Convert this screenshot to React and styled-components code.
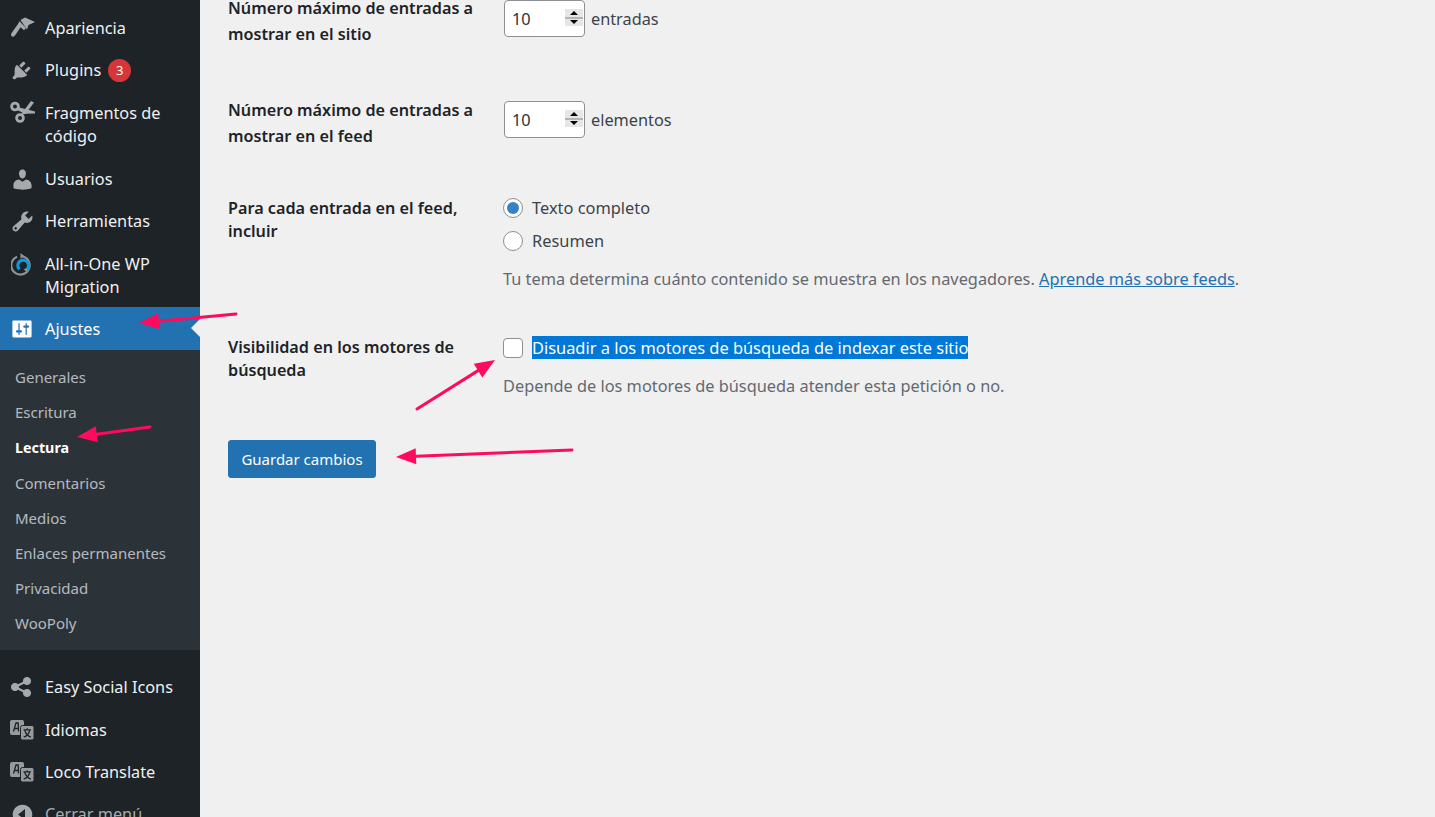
import React from 'react'
import styled, { createGlobalStyle } from 'styled-components'

const GlobalStyle = createGlobalStyle`
    html, body { margin: 0; padding: 0; height: 100%; overflow: hidden; background: #f0f0f1; }
    body { font-family: "Noto Sans", "Open Sans", sans-serif; }
`

const Page = styled.div`
    position: relative;
    display: flex;
    width: 100%;
    height: 817px;
    overflow: hidden;
`

const Sidebar = styled.nav`
    flex: 0 0 200px;
    width: 200px;
    padding-top: 7px;
    background: #1d2327;
    overflow: hidden;
`

const MenuItem = styled.div`
    position: relative;
    display: flex;
    align-items: ${p => (p.$two ? 'flex-start' : 'center')};
    padding: ${p => p.$pad || '9.6px 10px'};
    margin-top: ${p => p.$top || 0}px;
    font-size: 16.3px;
    line-height: 23px;
    color: ${p => (p.$dim ? '#a7aaad' : '#f0f0f1')};
    background: ${p => (p.$active ? '#2271b1' : 'transparent')};
    ${p => p.$active && 'color: #fff;'}
`

const IconBox = styled.span`
    flex: 0 0 35px;
    width: 35px;
    height: 23px;
    display: flex;
    align-items: center;
    color: ${p => (p.$active ? '#fff' : '#a7aaad')};
`

const Pointer = styled.span`
    position: absolute;
    right: 0;
    top: 50%;
    margin-top: -9px;
    border: 9px solid transparent;
    border-right-color: #f0f0f1;
    border-left-width: 0;
`

const Badge = styled.span`
    display: inline-flex;
    align-items: center;
    justify-content: center;
    width: 23px;
    height: 23px;
    margin-left: 7px;
    border-radius: 50%;
    background: #d63638;
    color: #fff;
    font-size: 13px;
`

const SubMenu = styled.div`
    background: #2c3338;
    padding: 9.5px 0 9px;
    margin-bottom: 16px;
`

const SubItem = styled.div`
    padding: 0 15px;
    height: 35.2px;
    display: flex;
    align-items: center;
    font-size: ${p => (p.$current ? '14.3px' : '15px')};
    font-weight: ${p => (p.$current ? 700 : 400)};
    color: ${p => (p.$current ? '#fff' : 'rgba(240, 246, 252, 0.7)')};
`

const Content = styled.main`
    flex: 1;
    padding: 0 0 0 28px;
    color: #3c434a;
`

const FormRow = styled.div`
    display: flex;
    align-items: flex-start;
    margin-top: ${p => p.$top}px;
`

const Label = styled.div`
    flex: 0 0 276px;
    padding-right: 26px;
    box-sizing: border-box;
    font-size: 16.2px;
    font-weight: 600;
    color: #1d2327;
    line-height: ${p => p.$lh}px;
`

const Field = styled.div`
    flex: 1;
    margin: ${p => p.$top || 0}px 0 0 -1px;
    font-size: 16.4px;
    line-height: 23px;
`

const InlineField = styled.div`
    display: flex;
    align-items: center;
    gap: 6px;
    margin-top: ${p => p.$top}px;
    font-size: 16.3px;
`

const NumberBox = styled.div`
    position: relative;
    width: 81px;
    height: 37px;
`

const NumberInput = styled.input`
    box-sizing: border-box;
    width: 100%;
    height: 100%;
    padding: 0 7px;
    border: 1px solid #8c8f94;
    border-radius: 4px;
    background: #fff;
    color: #2c3338;
    font-family: inherit;
    font-size: 16.3px;
    outline: none;
    appearance: textfield;
    &::-webkit-inner-spin-button {
        appearance: none;
    }
`

const Spinner = styled.span`
    position: absolute;
    right: 2px;
    top: 9px;
    width: 18px;
    height: 17px;
    display: flex;
    flex-direction: column;
    background: #e6e6e6;
    pointer-events: none;
`

const SpinPart = styled.span`
    flex: 1;
    display: flex;
    align-items: center;
    justify-content: center;
    ${p => p.$up && 'border-bottom: 2px solid #b4b4b4;'}
    &::before {
        content: "";
        border-left: 4px solid transparent;
        border-right: 4px solid transparent;
        ${p => (p.$up ? 'border-bottom: 4px solid #000;' : 'border-top: 4px solid #000;')}
    }
`

const Choice = styled.label`
    display: flex;
    align-items: center;
    gap: 9px;
    height: 23px;
    margin-bottom: ${p => p.$gap || 0}px;
`

const Radio = styled.input`
    appearance: none;
    box-sizing: border-box;
    width: 20px;
    height: 20px;
    margin: 0;
    border: 1px solid #8c8f94;
    border-radius: 50%;
    background: #fff;
    position: relative;
    &:checked::before {
        content: "";
        position: absolute;
        left: 3px;
        top: 3px;
        width: 12px;
        height: 12px;
        border-radius: 50%;
        background: #3582c4;
    }
`

const Checkbox = styled.input`
    appearance: none;
    box-sizing: border-box;
    width: 20px;
    height: 20px;
    margin: 0;
    border: 1px solid #8c8f94;
    border-radius: 4px;
    background: #fff;
`

const Selected = styled.span`
    background: #0078d7;
    color: #fff;
`

const Description = styled.p`
    margin: ${p => p.$top}px 0 0;
    color: #646970;
    font-size: 16.33px;
    line-height: 23px;
    a {
        color: #2271b1;
        text-decoration: underline;
    }
`

const SaveButton = styled.button`
    display: block;
    box-sizing: border-box;
    width: 148px;
    height: 38px;
    margin-top: 42px;
    border: 1px solid #2271b1;
    border-radius: 3px;
    background: #2271b1;
    color: #fff;
    font-family: inherit;
    font-size: 15px;
`

const ArrowLayer = styled.svg`
    position: absolute;
    left: 0;
    top: 0;
    pointer-events: none;
`

const Dash = ({ d, size = 20 }) => (
    <svg width={size} height={size} viewBox="0 0 20 20" fill="currentColor"><path d={d} /></svg>
)

const Brush = () => (
    <svg width="24" height="20" viewBox="0 0 24 20" fill="currentColor" style={{ marginLeft: 1, marginTop: -3 }}>
        <path d="M9.5 3L14 .5 24 5l-6.5 3-1.5 4.5z" />
        <path d="M8.5 4.2L15 11l-2 2.2-3.4-3L3.6 19c-1 1-2.4.9-3.1 0-.7-.9-.6-2 .3-3.2L7 7z" />
    </svg>
)

const Scissors = () => (
    <svg width="25" height="23" viewBox="0 0 25 23" fill="none" stroke="currentColor" strokeWidth="2.8" style={{ marginTop: -3 }}>
        <circle cx="5" cy="6.5" r="3.4" />
        <circle cx="10" cy="18" r="3.4" />
        <path d="M11 14.5L21 1l3 1.5-8.5 11.5z" fill="currentColor" stroke="none" />
        <path d="M7.5 7L25 11.5v2l-10 .2-8-3.7z" fill="currentColor" stroke="none" />
    </svg>
)

const Share = () => (
    <svg width="22" height="22" viewBox="0 0 22 22" fill="currentColor" stroke="currentColor">
        <circle cx="5" cy="11" r="3.6" />
        <circle cx="17" cy="5" r="3.6" />
        <circle cx="17" cy="17" r="3.6" />
        <path d="M5 11L17 5M5 11l12 6" strokeWidth="2" />
    </svg>
)

const Translate = () => (
    <svg width="24" height="20" viewBox="0 0 24 20">
        <rect x="0" y="0" width="14" height="15" rx="2" fill="#989b9e" />
        <path d="M3.5 11.5L6 3h2.2l.3 8.5M5 8.5h3.6" fill="none" stroke="#1d2327" strokeWidth="1.3" />
        <rect x="10.5" y="5.5" width="13.5" height="14.5" rx="2" fill="#989b9e" stroke="#1d2327" />
        <path d="M13.5 9.8h7.5M17.2 8.2v1.6M14.8 10.5c.9 3.6 3.3 5.6 6.2 6.6M19.7 10.5c-.9 3.6-3 5.6-6 6.6" fill="none" stroke="#1d2327" strokeWidth="1.2" />
    </svg>
)

const Migration = () => (
    <svg width="22" height="24" viewBox="0 0 22 24" fill="none" style={{ marginLeft: 1 }}>
        <path d="M6 3.8a9.2 9.2 0 1 0 6-.3" stroke="#8f9396" strokeWidth="2.2" />
        <path d="M9.5 0l4 3.2-4 2.6z" fill="#8f9396" />
        <path d="M14.6 17.4a5.4 5.4 0 1 0-6.2-1" stroke="#0a9ae0" strokeWidth="3.2" />
        <path d="M12.5 16.2l3.8-1-.4 3.8z" fill="#8f9396" />
    </svg>
)

const paths = {
    plug: 'M13.11 4.36L9.87 7.6 8 5.73l3.24-3.24c.35-.34 1.05-.2 1.56.32.52.51.66 1.21.31 1.55zm-8 1.77l.91-1.12 9.01 9.01-1.19.84c-.71.71-2.63 1.16-3.82 1.16H6.14L4.9 17.26c-.59.59-1.54.59-2.12 0-.59-.58-.59-1.53 0-2.12l1.24-1.24v-3.88c0-1.13.4-3.19 1.09-3.89zm7.26 3.97l3.24-3.24c.34-.35 1.04-.21 1.55.31.52.51.66 1.21.31 1.55l-3.24 3.25z',
    user: 'M10 9.25c-2.27 0-2.73-3.44-2.73-3.44C7 4.02 7.82 2 9.97 2c2.16 0 2.98 2.02 2.71 3.81 0 0-.41 3.44-2.68 3.44zm0 2.57L12.72 10c2.39 0 4.52 2.33 4.52 4.53v2.49s-3.65 1.13-7.24 1.13c-3.65 0-7.24-1.13-7.24-1.13v-2.49c0-2.25 1.94-4.48 4.47-4.48z',
    wrench: 'M16.68 9.77c-1.34 1.34-3.3 1.67-4.95.99l-5.41 6.52c-.99.99-2.59.99-3.58 0s-.99-2.59 0-3.57l6.52-5.42c-.68-1.65-.35-3.61.99-4.95 1.28-1.28 3.12-1.62 4.72-1.06l-2.89 2.89 2.82 2.82 2.86-2.87c.53 1.58.18 3.39-1.08 4.65zM3.81 16.21c.4.39 1.04.39 1.43 0 .4-.4.4-1.04 0-1.43-.39-.4-1.03-.4-1.43 0-.39.39-.39 1.03 0 1.43z',
    settings: 'M18 16V4c0-.55-.45-1-1-1H3c-.55 0-1 .45-1 1v12c0 .55.45 1 1 1h14c.55 0 1-.45 1-1zM8 11h1c.55 0 1 .45 1 1s-.45 1-1 1H8v1.5c0 .28-.22.5-.5.5s-.5-.22-.5-.5V13H6c-.55 0-1-.45-1-1s.45-1 1-1h1V5.5c0-.28.22-.5.5-.5s.5.22.5.5V11zm5-2h-1c-.55 0-1-.45-1-1s.45-1 1-1h1V5.5c0-.28.22-.5.5-.5s.5.22.5.5V7h1c.55 0 1 .45 1 1s-.45 1-1 1h-1v5.5c0 .28-.22.5-.5.5s-.5-.22-.5-.5V9z',
    collapse: 'M10 2.16c4.33 0 7.84 3.51 7.84 7.84s-3.51 7.84-7.84 7.84S2.16 14.33 2.16 10 5.67 2.16 10 2.16zM12 5.5L6.5 10l5.5 4.5v-9z',
}

const subItems = ['Generales', 'Escritura', 'Lectura', 'Comentarios', 'Medios', 'Enlaces permanentes', 'Privacidad', 'WooPoly']

const Arrow = ({ x1, y1, x2, y2 }) => {
    // thin shaft ending in a filled head
    const a = Math.atan2(y2 - y1, x2 - x1)
    const bx = x2 - Math.cos(a) * 20
    const by = y2 - Math.sin(a) * 20
    const nx = -Math.sin(a)
    const ny = Math.cos(a)
    const head = `${x2},${y2} ${bx + nx * 8},${by + ny * 8} ${bx - nx * 8},${by - ny * 8}`
    return (
        <g>
            <line x1={x1} y1={y1} x2={bx} y2={by} stroke="#ff0a5c" strokeWidth="3" strokeLinecap="round" />
            <polygon points={head} fill="#ff0a5c" />
        </g>
    )
}

const NumberField = () => (
    <NumberBox>
        <NumberInput type="number" defaultValue="10" />
        <Spinner>
            <SpinPart $up />
            <SpinPart />
        </Spinner>
    </NumberBox>
)

const App = () => (
    <Page>
        <GlobalStyle />
        <Sidebar>
            <MenuItem><IconBox><Brush /></IconBox>Apariencia</MenuItem>
            <MenuItem><IconBox><Dash d={paths.plug} size={23} /></IconBox>Plugins<Badge>3</Badge></MenuItem>
            <MenuItem $two $pad="10.5px 10px 10.6px"><IconBox><Scissors /></IconBox><span>Fragmentos de<br />código</span></MenuItem>
            <MenuItem><IconBox><Dash d={paths.user} size={25} /></IconBox>Usuarios</MenuItem>
            <MenuItem><IconBox><Dash d={paths.wrench} size={25} /></IconBox>Herramientas</MenuItem>
            <MenuItem $two $pad="10.5px 10px 7.6px"><IconBox><Migration /></IconBox><span>All-in-One WP<br />Migration</span></MenuItem>
            <MenuItem $active $pad="11px 10px 9px"><IconBox $active><Dash d={paths.settings} size={24} /></IconBox>Ajustes<Pointer /></MenuItem>
            <SubMenu>
                {subItems.map(item => (
                    <SubItem key={item} $current={item === 'Lectura'}>{item}</SubItem>
                ))}
            </SubMenu>
            <MenuItem><IconBox><Share /></IconBox>Easy Social Icons</MenuItem>
            <MenuItem $top={1}><IconBox><Translate /></IconBox>Idiomas</MenuItem>
            <MenuItem><IconBox><Translate /></IconBox>Loco Translate</MenuItem>
            <MenuItem $dim><IconBox><Dash d={paths.collapse} size={25} /></IconBox>Cerrar menú</MenuItem>
        </Sidebar>
        <Content>
            <FormRow $top={-5}>
                <Label $lh={26}>Número máximo de entradas a mostrar en el sitio</Label>
                <InlineField $top={5}>
                    <NumberField />
                    entradas
                </InlineField>
            </FormRow>
            <FormRow $top={50}>
                <Label $lh={26}>Número máximo de entradas a mostrar en el feed</Label>
                <InlineField $top={4}>
                    <NumberField />
                    elementos
                </InlineField>
            </FormRow>
            <FormRow $top={48}>
                <Label $lh={23}>Para cada entrada en el feed, incluir</Label>
                <Field $top={-1}>
                    <Choice $gap={10}><Radio type="radio" name="feed" defaultChecked />Texto completo</Choice>
                    <Choice><Radio type="radio" name="feed" />Resumen</Choice>
                    <Description $top={16}>
                        Tu tema determina cuánto contenido se muestra en los navegadores. <a href="#feeds">Aprende más sobre feeds</a>.
                    </Description>
                </Field>
            </FormRow>
            <FormRow $top={45}>
                <Label $lh={23}>Visibilidad en los motores de búsqueda</Label>
                <Field>
                    <Choice><Checkbox type="checkbox" /><Selected>Disuadir a los motores de búsqueda de indexar este sitio</Selected></Choice>
                    <Description $top={16}>Depende de los motores de búsqueda atender esta petición o no.</Description>
                </Field>
            </FormRow>
            <SaveButton>Guardar cambios</SaveButton>
        </Content>
        <ArrowLayer width="1435" height="817">
            <Arrow x1={236} y1={314} x2={139} y2={323} />
            <Arrow x1={150} y1={427} x2={77} y2={437} />
            <Arrow x1={417} y1={409} x2={495} y2={360} />
            <Arrow x1={572} y1={450} x2={396} y2={457} />
        </ArrowLayer>
    </Page>
)

export default App
